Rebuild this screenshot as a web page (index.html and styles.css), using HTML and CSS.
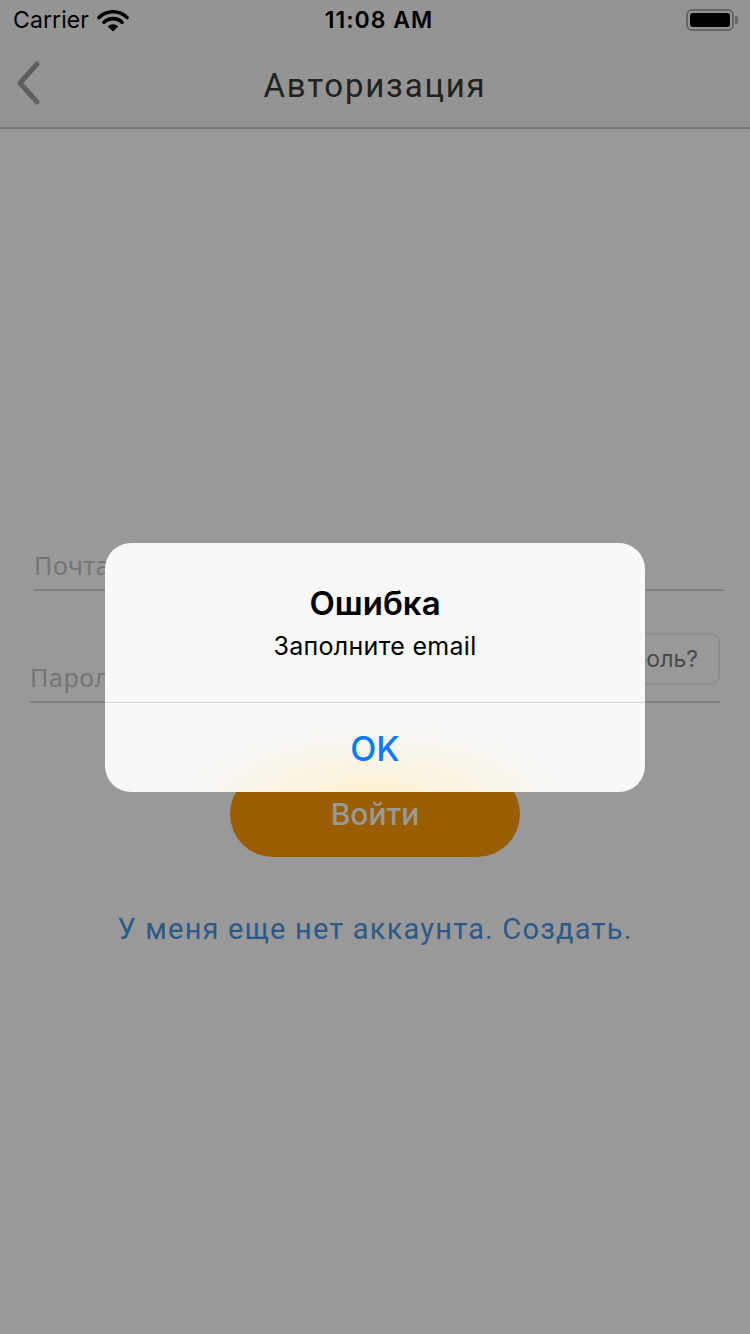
FILE: index.html
```html
<!DOCTYPE html>
<html lang="ru">
<head>
<meta charset="utf-8">
<title>Авторизация</title>
<link rel="stylesheet" href="styles.css">
</head>
<body>
<div class="screen">
  <header class="topbar">
    <div class="status">
      <div class="status-left">
        <span class="carrier">Carrier</span>
        <svg class="wifi" width="32" height="24" viewBox="0 0 32 24">
          <path d="M2 8.5 A20 20 0 0 1 30 8.5" fill="none" stroke="#000" stroke-width="3.6" stroke-linecap="round"/>
          <path d="M7 13.2 A13 13 0 0 1 25 13.2" fill="none" stroke="#000" stroke-width="3.6" stroke-linecap="round"/>
          <path d="M16 22.5 L10.6 17.4 A8 8 0 0 1 21.4 17.4 Z" fill="#000"/>
        </svg>
      </div>
      <span class="time">11:08 AM</span>
      <div class="status-right">
        <div class="battery"><div class="battery-fill"></div></div>
        <div class="battery-tip"></div>
      </div>
    </div>
    <nav class="navbar">
      <svg class="back" width="30" height="46" viewBox="0 0 30 46">
        <path d="M24 4 L7 23 L24 42" fill="none" stroke="#9e9e9e" stroke-width="5" stroke-linecap="round" stroke-linejoin="round"/>
      </svg>
      <h1 class="nav-title">Авторизация</h1>
    </nav>
  </header>
  <main class="content">
    <div class="field field-email">
      <span class="placeholder">Почта</span>
    </div>
    <div class="field field-pass">
      <span class="placeholder">Пароль</span>
      <button class="forgot">Забыли пароль?</button>
    </div>
    <button class="login">Войти</button>
    <a class="signup" href="#">У меня еще нет аккаунта. Создать.</a>
  </main>
  <div class="dim"></div>
  <div class="alert">
    <div class="alert-body">
      <div class="alert-title">Ошибка</div>
      <div class="alert-msg">Заполните email</div>
    </div>
    <div class="alert-action">OK</div>
  </div>
</div>
</body>
</html>
```

FILE: styles.css
```css
* { box-sizing: border-box; }
html, body { margin: 0; padding: 0; }
body {
  width: 750px;
  height: 1334px;
  background: #fff;
  font-family: Roboto, "Noto Sans", sans-serif;
  overflow: hidden;
}
.screen {
  position: relative;
  width: 750px;
  height: 1334px;
  background: #fff;
}
.topbar {
  background: #f7f7f7;
  border-bottom: 2px solid #c9c9c9;
}
.status {
  height: 40px;
  display: flex;
  align-items: center;
  justify-content: space-between;
  padding: 0 12px 0 13px;
  font-family: Inter, "Noto Sans", sans-serif;
  color: #000;
  position: relative;
}
.status-left { display: flex; align-items: center; gap: 8px; }
.carrier { font-size: 23px; letter-spacing: 0.1px; }
.wifi { margin-top: 1px; }
.time {
  position: absolute;
  left: 8px; right: 0;
  text-align: center;
  font-size: 23px;
  font-weight: 600;
  letter-spacing: 1px;
  pointer-events: none;
}
.status-right { display: flex; align-items: center; }
.battery {
  width: 48px;
  height: 22px;
  border: 2px solid #a8a8a8;
  border-radius: 6px;
  padding: 2px;
}
.battery-fill { width: 100%; height: 100%; background: #000; border-radius: 3px; }
.battery-tip {
  width: 3px; height: 8px;
  background: #a8a8a8;
  border-radius: 0 2px 2px 0;
  margin-left: 1px;
}
.navbar {
  height: 87px;
  display: flex;
  align-items: center;
  justify-content: center;
  position: relative;
}
.back { position: absolute; left: 13px; top: 20px; }
.nav-title {
  margin: 0;
  padding-top: 4px;
  font-size: 33px;
  font-weight: 400;
  color: #383838;
  letter-spacing: 1.8px;
}
.content {
  display: flex;
  flex-direction: column;
  align-items: center;
  padding-top: 411px;
}
.field {
  height: 51px;
  border-bottom: 2px solid #d4d4d4;
  display: flex;
  align-items: flex-end;
  justify-content: space-between;
  position: relative;
  width: 690px;
  align-self: flex-start;
}
.field-email { margin-left: 34px; }
.field-pass { margin-left: 30px; margin-top: 61px; }
.placeholder {
  font-family: "Noto Sans", Inter, sans-serif;
  font-size: 25px;
  line-height: 30px;
  color: #c4c4c4;
  letter-spacing: 0.6px;
  padding-bottom: 9px;
}
.forgot {
  height: 52px;
  margin-bottom: 16px;
  padding: 0 20px;
  background: #fff;
  border: 2px solid #ececec;
  border-radius: 9px;
  font-family: Inter, "Noto Sans", sans-serif;
  font-size: 23px;
  color: #7b7b7b;
}
.login {
  margin-top: 68px;
  width: 290px;
  height: 86px;
  border: none;
  border-radius: 43px;
  background: #ff9d00;
  color: #fff;
  font-family: Inter, "Noto Sans", sans-serif;
  font-size: 30px;
  font-weight: 500;
  padding: 0;
}
.signup {
  margin-top: 55px;
  font-size: 29px;
  color: #4696e3;
  text-decoration: none;
  letter-spacing: 1.2px;
}
.dim {
  position: absolute;
  inset: 0;
  background: rgba(0, 0, 0, 0.4);
}
.alert {
  position: absolute;
  left: 105px;
  top: 543px;
  width: 540px;
  height: 249px;
  border-radius: 26px;
  overflow: hidden;
  background:
    radial-gradient(ellipse 200px 80px at 270px 260px, rgba(252, 236, 190, 0.75), rgba(252, 240, 210, 0) 100%),
    #f8f8f8;
  font-family: Inter, "Noto Sans", sans-serif;
  color: #000;
  display: flex;
  flex-direction: column;
}
.alert-body {
  height: 160px;
  display: flex;
  flex-direction: column;
  align-items: center;
  padding-top: 40px;
  border-bottom: 1px solid #d8d8d8;
}
.alert-title {
  font-size: 33px;
  font-weight: 600;
  line-height: 40px;
}
.alert-msg {
  font-size: 25px;
  line-height: 30px;
  margin-top: 8px;
  letter-spacing: 0.3px;
}
.alert-action {
  flex: 1;
  display: flex;
  align-items: center;
  justify-content: center;
  color: #0a7aff;
  font-size: 34px;
  font-weight: 500;
  padding-top: 2px;
}
```
